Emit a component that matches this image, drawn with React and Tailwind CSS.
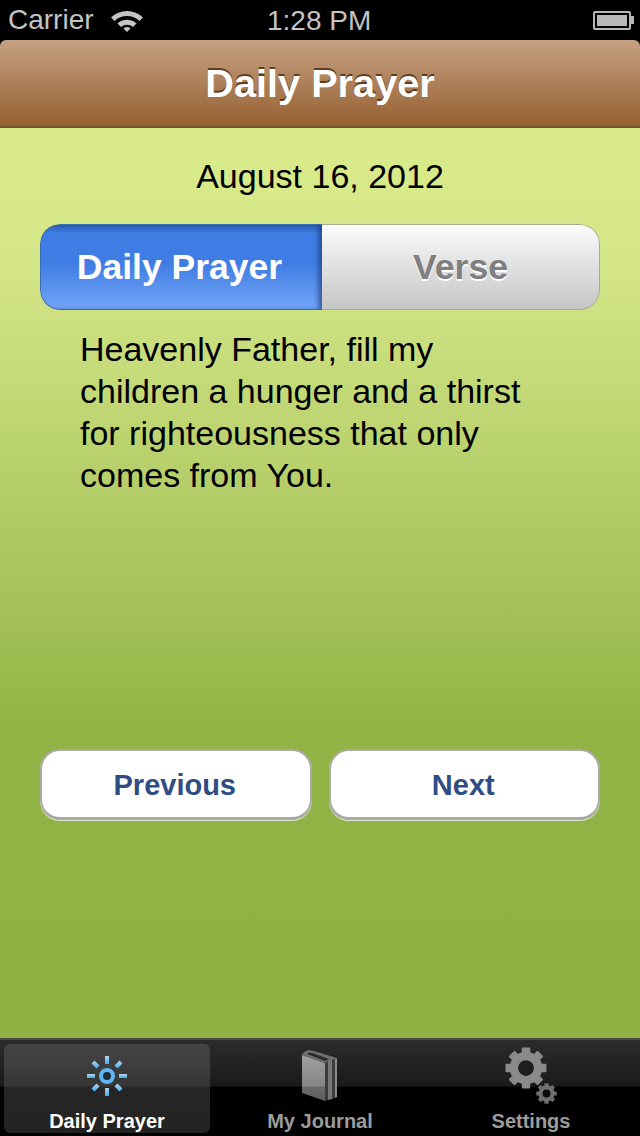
const Wifi = () => (
  <svg width="32" height="23" viewBox="0 0 32 23" className="ml-[17px]">
    <path d="M0 8.5 A23 23 0 0 1 32 8.5 L28.5 12 A18 18 0 0 0 3.5 12 Z" fill="#c4c4c4" />
    <path d="M6.5 14.5 A14 14 0 0 1 25.5 14.5 L22 18 A9 9 0 0 0 10 18 Z" fill="#c4c4c4" />
    <path d="M16 23 L12.5 19.5 A5 5 0 0 1 19.5 19.5 Z" fill="#c4c4c4" />
  </svg>
)

const Battery = () => (
  <div className="flex items-center">
    <div className="w-[38px] h-[19px] border-2 border-[#b5b5b5] rounded-[2px] p-[2px]">
      <div className="w-full h-full bg-[#b8b8b8]" />
    </div>
    <div className="w-[3px] h-[8px] bg-[#b5b5b5]" />
  </div>
)

const SunIcon = () => (
  <svg width="40" height="40" viewBox="0 0 40 40">
    <defs>
      <linearGradient id="sunFill" x1="0" y1="0" x2="0" y2="1">
        <stop offset="0" stopColor="#b9cfdf" />
        <stop offset="0.5" stopColor="#7fc4ee" />
        <stop offset="1" stopColor="#2fb0f6" />
      </linearGradient>
    </defs>
    <g fill="url(#sunFill)">
      <rect x="18" y="0" width="4" height="8" />
      <rect x="18" y="32" width="4" height="8" />
      <rect x="0" y="18" width="8" height="4" />
      <rect x="32" y="18" width="8" height="4" />
      <path d="M4.5 7.5 L7.5 4.5 L12.5 9.5 L9.5 12.5 Z" />
      <path d="M35.5 7.5 L32.5 4.5 L27.5 9.5 L30.5 12.5 Z" />
      <path d="M4.5 32.5 L7.5 35.5 L12.5 30.5 L9.5 27.5 Z" />
      <path d="M35.5 32.5 L32.5 35.5 L27.5 30.5 L30.5 27.5 Z" />
    </g>
    <circle cx="20" cy="20" r="6" fill="#1d2c3a" stroke="#5fb4f2" strokeWidth="4" />
  </svg>
)

const BookIcon = () => (
  <svg width="36" height="53" viewBox="0 0 36 53">
    <defs>
      <linearGradient id="bookFill" x1="0" y1="0" x2="0" y2="1">
        <stop offset="0" stopColor="#a0a0a0" />
        <stop offset="0.68" stopColor="#858585" />
        <stop offset="0.69" stopColor="#6a6a6a" />
        <stop offset="1" stopColor="#5c5c5c" />
      </linearGradient>
    </defs>
    <path d="M0 5 L23 13 L23 51 L0 43 Z" fill="url(#bookFill)" />
    <path d="M0 5 Q2 1 7 0 L12 1 L35 8 L23 13 Z" fill="#6e6e6e" />
    <path d="M5 4 Q7 2 10 3 L27 9 L23 11 Z" fill="#2c2c2c" />
    <path d="M23 13 L26 11 L26 50 L23 51 Z" fill="#3a3a3a" />
    <path d="M26 11 L30 10 L30 49 L26 50 Z" fill="#777" />
    <path d="M30 10 L33 9 L33 48 L30 49 Z" fill="#3c3c3c" />
    <path d="M33 9 L35 8 L35 47 L33 48 Z" fill="#8a8a8a" />
  </svg>
)

// 4 bars crossed through the centre give the 8 teeth
const Gear = ({ size, color, hole }) => (
  <svg width={size} height={size} viewBox="0 0 40 40">
    {[0, 45, 90, 135].map(a => (
      <rect key={a} x="16" y="0.5" width="8" height="39" rx="1" fill={color} transform={`rotate(${a} 20 20)`} />
    ))}
    <circle cx="20" cy="20" r="15.5" fill={color} />
    <circle cx="20" cy="20" r="7.5" fill={hole} />
  </svg>
)

export default function App() {
  return (
    <div className="w-[640px] h-[1136px] flex flex-col overflow-hidden bg-black font-['Liberation_Sans',Arial,sans-serif]">
      {/* status bar */}
      <div className="h-[40px] shrink-0 bg-black relative flex items-center justify-between pl-[8px] pr-[6px] text-[#c4c4c4] text-[28px]">
        <div className="flex items-center">
          <span>Carrier</span>
          <Wifi />
        </div>
        <span className="absolute left-[267px] top-0">1:28 PM</span>
        <Battery />
      </div>

      {/* nav bar */}
      <div className="h-[88px] shrink-0 rounded-t-[6px] bg-gradient-to-b from-[#c6a183] to-[#95602f] border-b-2 border-[#6f5330] flex items-center justify-center">
        <h1 className="text-[39.7px] pt-[1px] font-bold text-white [text-shadow:0_-2px_0_rgba(70,40,15,0.8)]">Daily Prayer</h1>
      </div>

      {/* content */}
      <div className="flex-1 bg-[linear-gradient(to_bottom,#d9eb89_0%,#d5e689_15%,#92b446_66%,#8fb144_100%)] flex flex-col px-[40px]">
        <div className="h-[96px] shrink-0 flex items-center justify-center text-[34px] text-black pt-[1px]">August 16, 2012</div>

        <div className="h-[86px] shrink-0 flex rounded-[20px] overflow-hidden">
          <div className="w-[282px] pt-[2px] pr-[4px] bg-[linear-gradient(to_bottom,#2b62b8_0%,#3f7ce3_10%,#3f7ce3_45%,#72a5f8_100%)] border border-r-0 border-[#3a6cb0] rounded-l-[20px] shadow-[inset_-5px_0_4px_-1px_rgba(20,50,110,0.55)] flex items-center justify-center text-[35.5px] font-bold text-white">
            Daily Prayer
          </div>
          <div className="flex-1 pt-[2px] bg-gradient-to-b from-[#fbfbfb] to-[#c6c6c6] border border-[#a4ad8e] border-l-0 rounded-r-[20px] flex items-center justify-center text-[35.5px] font-bold text-[#7f7f7f] [text-shadow:0_2px_0_#ffffff]">
            Verse
          </div>
        </div>

        <p className="mt-[18px] pl-[40px] pr-[60px] text-[34px] leading-[42px] text-black">
          Heavenly Father, fill my children a hunger and a thirst for righteousness that only comes from You.
        </p>

        <div className="mt-[253px] flex gap-[17px]">
          {['Previous', 'Next'].map(label => (
            <button key={label} className="flex-1 h-[71px] pt-[4px] pr-[2px] bg-white border-2 border-[#a8aba0] border-b-[3px] rounded-[20px] text-[29px] font-bold text-[#2f4d84] flex items-center justify-center shadow-[0_1px_0_#dfe6d0]">
              {label}
            </button>
          ))}
        </div>
      </div>

      {/* tab bar */}
      <div className="h-[98px] shrink-0 border-t-2 border-[#4a4a4a] grid grid-cols-[214px_1fr_214px] text-[20px] font-bold bg-[linear-gradient(to_bottom,#2c2c2c_0px,#1a1a1a_46px,#000000_47px,#000000_100%)]">
        <div className="mx-[4px] my-[4px] rounded-[6px] bg-[linear-gradient(to_bottom,#454545_0px,#363636_42px,#262626_43px,#232323_100%)] flex flex-col items-center text-white">
          <div className="h-[65px] pt-[12px]"><SunIcon /></div>
          <span className="leading-[24px]">Daily Prayer</span>
        </div>
        <div className="flex flex-col items-center text-[#9c9c9c]">
          <div className="h-[69px] pt-[10px]"><BookIcon /></div>
          <span className="leading-[24px]">My Journal</span>
        </div>
        <div className="flex flex-col items-center pr-[4px] text-[#9c9c9c]">
          <div className="h-[69px] w-[52px] pt-[7px] relative">
            <Gear size={42} color="#8a8a8a" hole="#1e1e1e" />
            <div className="absolute left-[31px] top-[43px]"><Gear size={21} color="#6f6f6f" hole="#0c0c0c" /></div>
          </div>
          <span className="leading-[24px]">Settings</span>
        </div>
      </div>
    </div>
  )
}
